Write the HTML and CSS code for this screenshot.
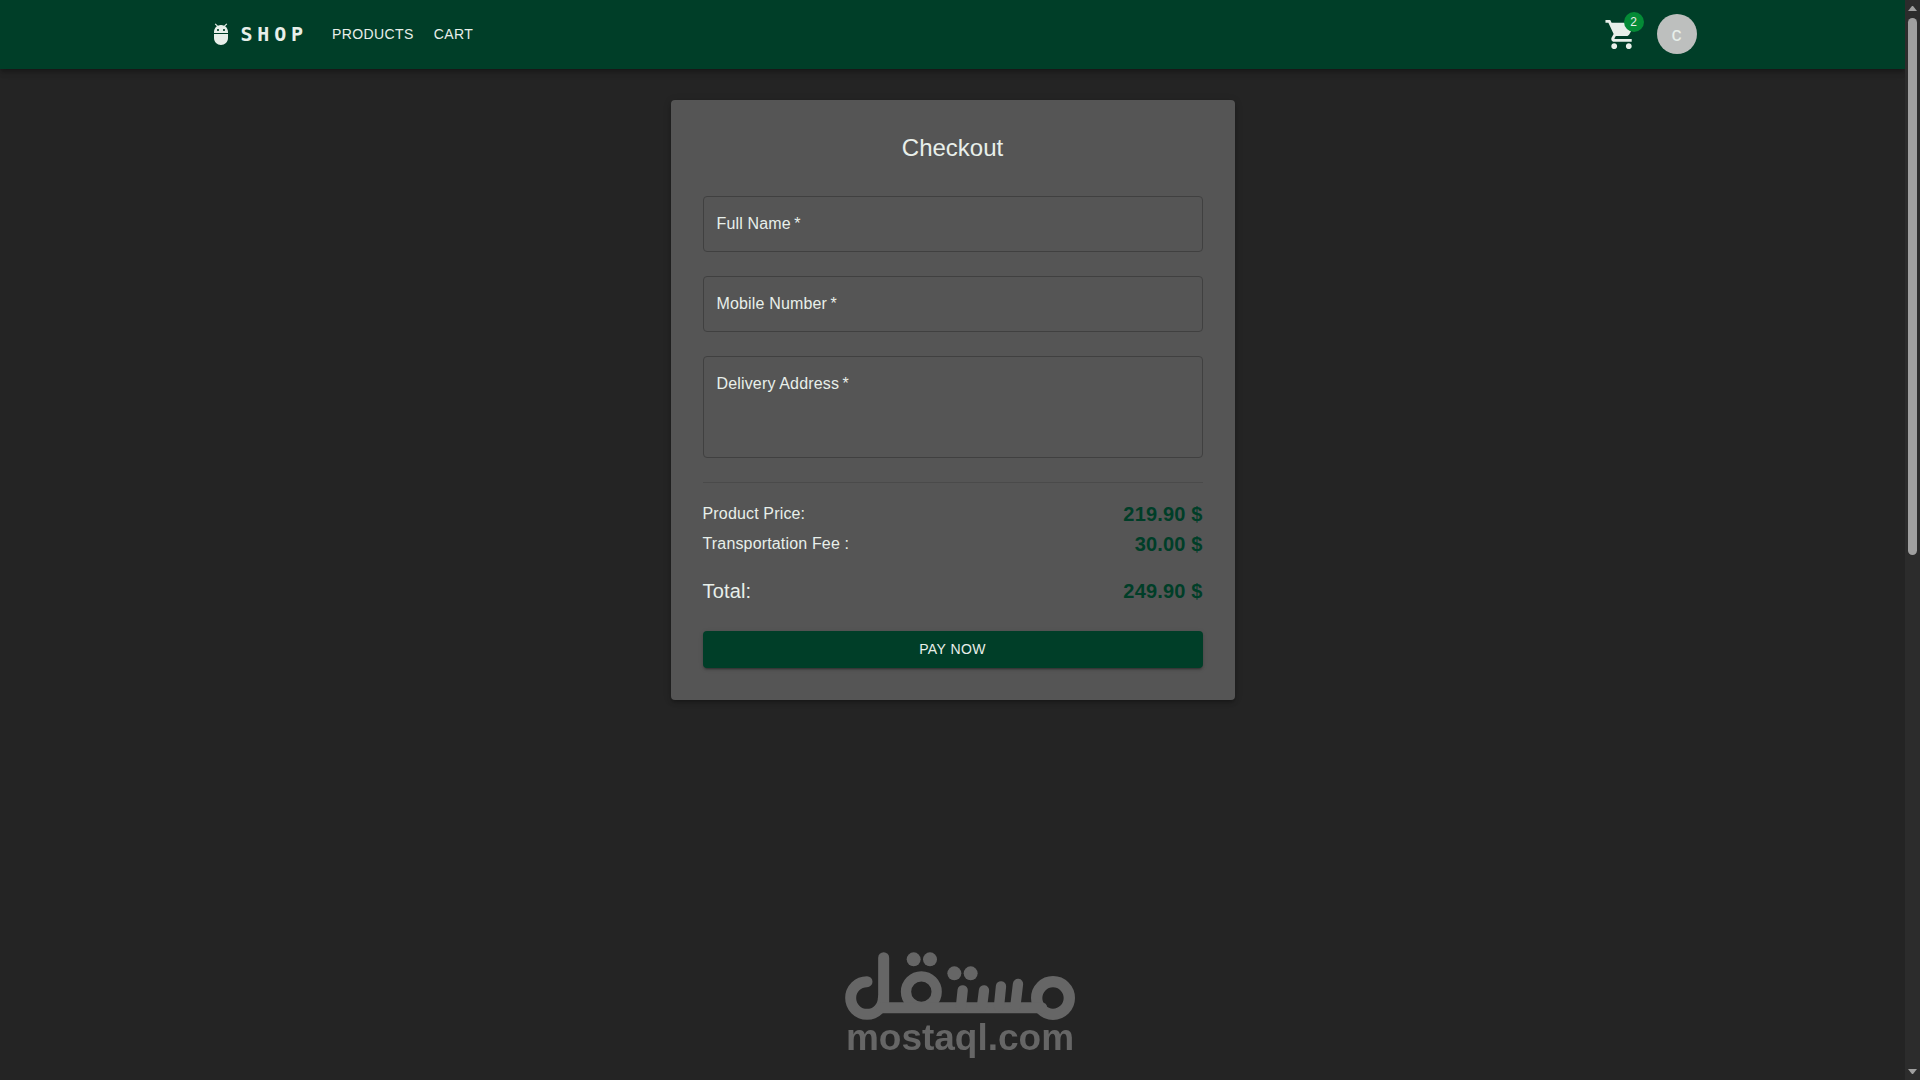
FILE: index.html
```html
<!DOCTYPE html>
<html lang="en">
<head>
  <meta charset="utf-8">
  <meta name="viewport" content="width=device-width, initial-scale=1">
  <title>Checkout - Shop</title>
  <link rel="stylesheet" href="styles.css">
</head>
<body>
  <header class="app-bar">
    <div class="toolbar">
      <a class="brand" href="#">
        <svg class="brand-icon" viewBox="0 0 24 24" aria-hidden="true"><path d="M5 16c0 3.87 3.13 7 7 7s7-3.13 7-7v-4H5v4zM16.12 4.37l2.1-2.1-.82-.83-2.3 2.31C14.16 3.28 13.12 3 12 3s-2.16.28-3.09.75L6.6 1.44l-.82.83 2.1 2.1C6.14 5.64 5 7.68 5 10v1h14v-1c0-2.32-1.14-4.36-2.88-5.63zM9 9c-.55 0-1-.45-1-1s.45-1 1-1 1 .45 1 1-.45 1-1 1zm6 0c-.55 0-1-.45-1-1s.45-1 1-1 1 .45 1 1-.45 1-1 1z"/></svg>
        <span class="brand-name">SHOP</span>
      </a>
      <nav class="nav">
        <a class="nav-link" href="#">PRODUCTS</a>
        <a class="nav-link" href="#">CART</a>
      </nav>
      <div class="actions">
        <button class="cart-button" type="button" aria-label="Cart">
          <svg class="cart-icon" viewBox="0 0 24 24" aria-hidden="true"><path d="M7 18c-1.1 0-1.99.9-1.99 2S5.9 22 7 22s2-.9 2-2-.9-2-2-2zM1 2v2h2l3.6 7.59-1.35 2.45c-.16.28-.25.61-.25.96 0 1.1.9 2 2 2h12v-2H7.42c-.14 0-.25-.11-.25-.25l.03-.12.9-1.63h7.45c.75 0 1.41-.41 1.75-1.03l3.58-6.49c.08-.14.12-.31.12-.48 0-.55-.45-1-1-1H5.21l-.94-2H1zm16 16c-1.1 0-1.99.9-1.99 2s.89 2 1.99 2 2-.9 2-2-.9-2-2-2z"/></svg>
          <span class="badge">2</span>
        </button>
        <button class="avatar" type="button">c</button>
      </div>
    </div>
  </header>

  <main class="page">
    <form class="card">
      <h1 class="title">Checkout</h1>
      <div class="fields">
        <div class="field">
          <input class="control" id="full-name" type="text">
          <label class="label" for="full-name">Full Name&thinsp;*</label>
        </div>
        <div class="field">
          <input class="control" id="mobile" type="tel">
          <label class="label" for="mobile">Mobile Number&thinsp;*</label>
        </div>
        <div class="field">
          <textarea class="control control-area" id="address"></textarea>
          <label class="label" for="address">Delivery Address&thinsp;*</label>
        </div>
      </div>
      <hr class="divider">
      <dl class="summary">
        <div class="row"><dt>Product Price:</dt><dd class="amount">219.90 $</dd></div>
        <div class="row"><dt>Transportation Fee :</dt><dd class="amount">30.00 $</dd></div>
        <div class="row row-total"><dt>Total:</dt><dd class="amount">249.90 $</dd></div>
      </dl>
      <button class="pay-button" type="button">PAY NOW</button>
    </form>
  </main>

  <div class="watermark">
    <svg class="watermark-logo" viewBox="75 65 690 204" role="img" aria-label="مستقل">
      <g class="watermark-strokes">
        <circle cx="699" cy="203" r="49" stroke-width="34"/>
        <circle cx="304" cy="184" r="46" stroke-width="31"/>
        <path d="M141 154A49 49 0 1 0 190 203" stroke-width="33"/>
        <line x1="191" y1="82" x2="191" y2="220" stroke-width="33"/>
        <line x1="185" y1="232" x2="665" y2="232" stroke-width="33"/>
        <line x1="428" y1="180" x2="423" y2="228" stroke-width="31"/>
        <line x1="492" y1="180" x2="486" y2="228" stroke-width="31"/>
        <line x1="543" y1="168" x2="537" y2="228" stroke-width="31"/>
        <line x1="594" y1="161" x2="586" y2="228" stroke-width="31"/>
      </g>
      <g class="watermark-dots">
        <circle cx="281" cy="87" r="21"/>
        <circle cx="330" cy="87" r="21"/>
        <circle cx="403" cy="129" r="21"/>
        <circle cx="452" cy="129" r="21"/>
      </g>
    </svg>
    <span class="watermark-text">mostaql.com</span>
  </div>

  <div class="scrollbar" aria-hidden="true">
    <svg class="scroll-arrow" viewBox="0 0 9 5"><path d="M0 5L4 0h1l4 5z"/></svg>
    <div class="scroll-track"><div class="scroll-thumb"></div></div>
    <svg class="scroll-arrow" viewBox="0 0 9 5"><path d="M0 0h9L5 5H4z"/></svg>
  </div>
</body>
</html>
```
FILE: styles.css
```css
:root {
  --green: #003e28;
  --text: #e8efea;
  --surface: #555555;
  --page: #242424;
  --scrollbar: 15px;
}

* {
  box-sizing: border-box;
}

body {
  margin: 0;
  padding-right: var(--scrollbar);
  min-height: 100vh;
  background: var(--page);
  color: var(--text);
  font-family: "Liberation Sans", Arial, sans-serif;
  font-size: 16px;
  line-height: 24px;
}

button {
  border: 0;
  padding: 0;
  font-family: inherit;
  color: inherit;
  cursor: pointer;
}

a {
  color: inherit;
  text-decoration: none;
}

/* App bar */

.app-bar {
  padding-bottom: 1px;
  background: var(--green);
  box-shadow: 0 2px 4px -1px rgba(0, 0, 0, 0.2), 0 4px 5px rgba(0, 0, 0, 0.14), 0 1px 10px rgba(0, 0, 0, 0.12);
}

.toolbar {
  display: flex;
  align-items: center;
  max-width: 1536px;
  min-height: 68px;
  margin: 0 auto;
  padding: 0 24px;
}

.brand {
  display: flex;
  align-items: center;
  gap: 8px;
  margin-right: 16px;
}

.brand-icon {
  width: 24px;
  height: 24px;
  fill: currentColor;
}

.brand-name {
  font-family: "DejaVu Sans Mono", monospace;
  font-size: 20px;
  font-weight: 700;
  line-height: 32px;
  letter-spacing: 0.24em;
}

.nav {
  display: flex;
  gap: 4px;
}

.nav-link {
  padding: 6px 8px;
  font-size: 14px;
  letter-spacing: 0.03em;
}

.actions {
  display: flex;
  align-items: center;
  gap: 18px;
  margin-left: auto;
}

.cart-button {
  position: relative;
  display: flex;
  background: none;
}

.cart-icon {
  width: 35px;
  height: 35px;
  fill: currentColor;
}

.badge {
  position: absolute;
  top: -5px;
  right: -5px;
  width: 20px;
  height: 20px;
  border-radius: 50%;
  background: #048b36;
  font-size: 12px;
  line-height: 20px;
  text-align: center;
}

.avatar {
  width: 40px;
  height: 40px;
  border-radius: 50%;
  background: #bdbfbe;
  font-size: 20px;
  line-height: 40px;
}

/* Checkout card */

.page {
  padding: 31px 24px;
}

.card {
  max-width: 564px;
  margin: 0 auto;
  padding: 32px;
  border-radius: 4px;
  background: var(--surface);
  box-shadow: 0 3px 3px -2px rgba(0, 0, 0, 0.2), 0 3px 4px rgba(0, 0, 0, 0.14), 0 1px 8px rgba(0, 0, 0, 0.12);
}

.title {
  margin: 0 0 32px;
  font-size: 24px;
  font-weight: 400;
  line-height: 32px;
  text-align: center;
}

.fields {
  display: grid;
  gap: 24px;
  letter-spacing: 0.01em;
}

.field {
  display: grid;
}

.control,
.label {
  grid-area: 1 / 1;
}

.control {
  width: 100%;
  height: 56px;
  padding: 16px 14px;
  border: 1px solid #404040;
  border-radius: 4px;
  background: transparent;
  color: inherit;
  font: inherit;
}

.control-area {
  height: 102px;
  resize: none;
}

.label {
  align-self: start;
  justify-self: start;
  padding: 16px 14px;
  pointer-events: none;
}

.divider {
  height: 1px;
  margin: 24px 0 16px;
  border: 0;
  background: #4a4a4a;
}

.summary {
  margin: 0 0 24px;
  letter-spacing: 0.01em;
}

.row {
  display: flex;
  justify-content: space-between;
  line-height: 30px;
}

.row-total {
  margin-top: 16px;
  font-size: 20px;
  line-height: 32px;
}

.amount {
  margin: 0;
  color: var(--green);
  font-size: 20px;
  font-weight: 700;
}

.pay-button {
  display: block;
  width: 100%;
  padding: 6px 16px;
  border-radius: 4px;
  background: var(--green);
  box-shadow: 0 3px 1px -2px rgba(0, 0, 0, 0.2), 0 2px 2px rgba(0, 0, 0, 0.14), 0 1px 5px rgba(0, 0, 0, 0.12);
  font-size: 14px;
  line-height: 25px;
  letter-spacing: 0.03em;
}

/* Watermark over the page */

.watermark {
  position: fixed;
  bottom: 24px;
  left: 0;
  right: 0;
  display: flex;
  flex-direction: column;
  align-items: center;
  color: #666666;
  pointer-events: none;
}

.watermark-logo {
  width: 230px;
  height: 68px;
}

.watermark-strokes {
  fill: none;
  stroke: currentColor;
  stroke-linecap: round;
}

.watermark-dots {
  fill: currentColor;
}

.watermark-text {
  font-size: 37px;
  font-weight: 700;
  line-height: 36px;
}

/* Scrollbar */

.scrollbar {
  position: fixed;
  top: 0;
  right: 0;
  bottom: 0;
  display: flex;
  flex-direction: column;
  align-items: center;
  width: var(--scrollbar);
  padding: 6px 0;
  background: #2c2c2c;
}

.scroll-arrow {
  width: 9px;
  height: 5px;
  fill: #9f9f9f;
}

.scroll-track {
  display: grid;
  flex: 1;
  grid-template-rows: 18fr 17fr;
  padding: 7px 0;
}

.scroll-thumb {
  width: 9px;
  border-radius: 5px;
  background: #9f9f9f;
}
```
